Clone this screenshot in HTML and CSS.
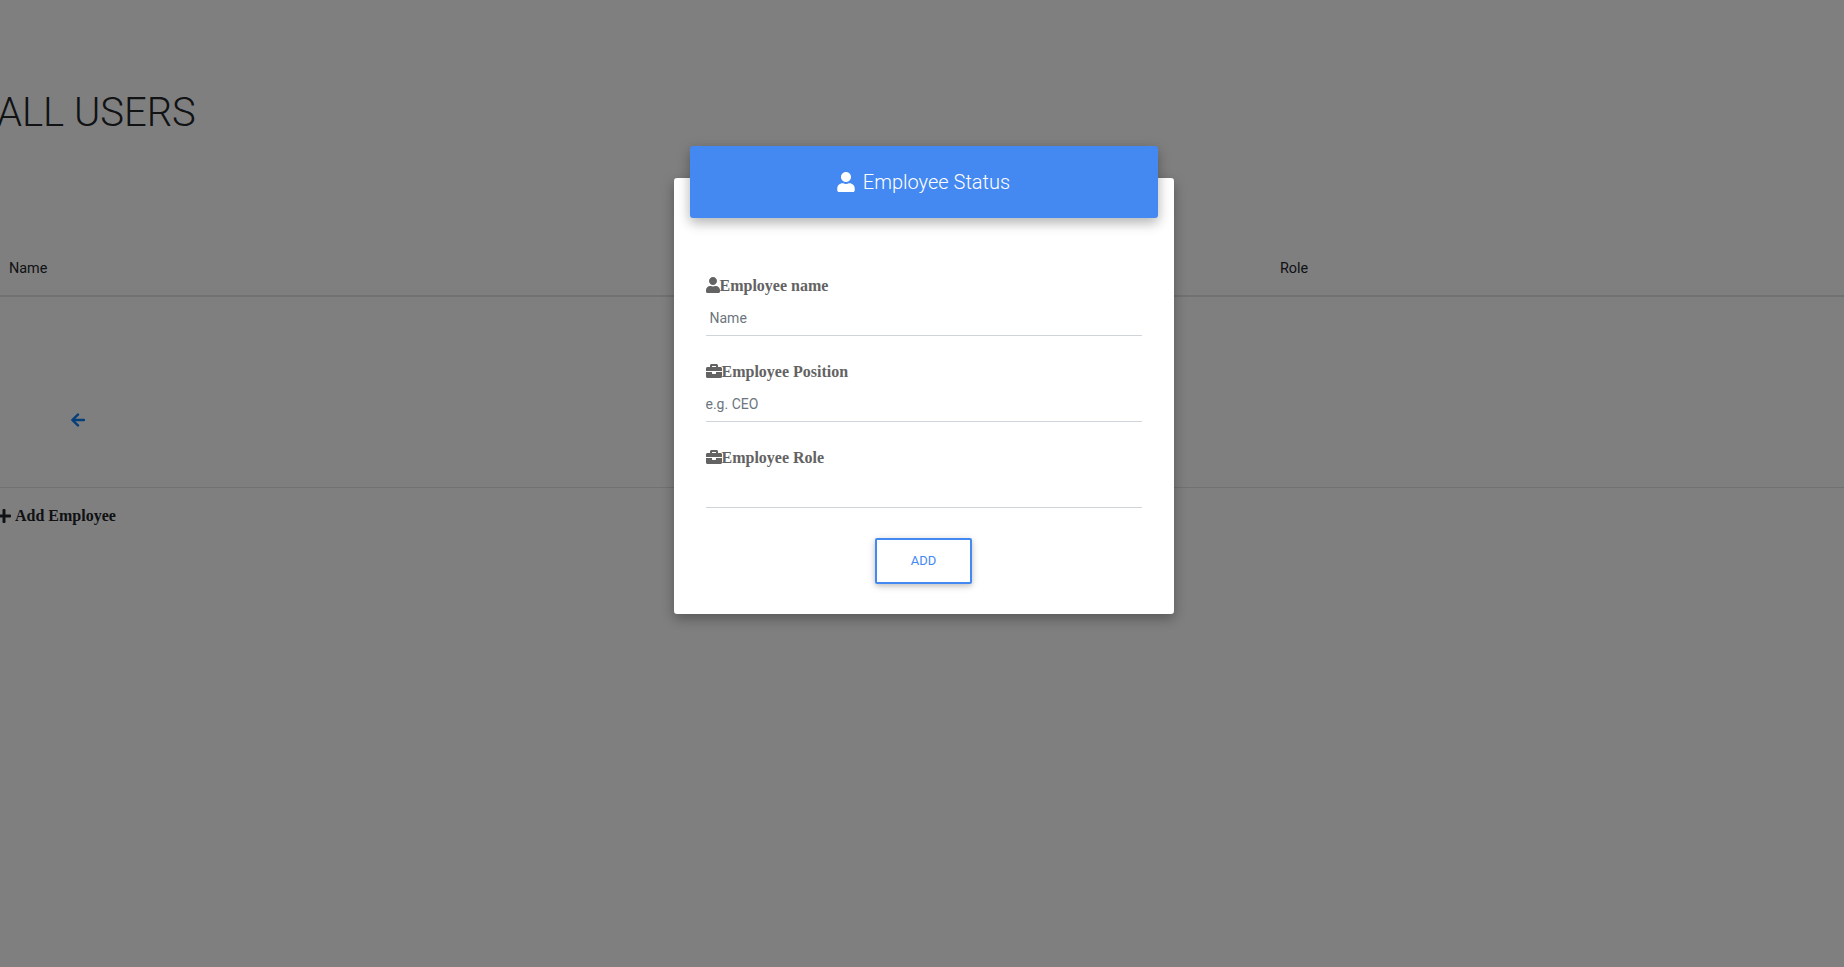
FILE: index.html
```html
<!DOCTYPE html>
<html lang="en">
<head>
  <meta charset="UTF-8" />
  <title>All Users</title>
  <link rel="stylesheet" href="styles.css">
</head>
<body>
  <div class="page">
    <h1 class="title">ALL USERS</h1>
    <div class="table-head">
      <div class="cell cell-name">Name</div>
      <div class="cell">Role</div>
    </div>
    <div class="pager">
      <svg class="icon icon-back" viewBox="0 0 448 512"><path d="M257.5 445.1l-22.2 22.2c-9.4 9.4-24.6 9.4-33.9 0L7 273c-9.4-9.4-9.4-24.6 0-33.9L201.4 44.7c9.4-9.4 24.6-9.4 33.9 0l22.2 22.2c9.5 9.5 9.3 25-.4 34.3L136.6 216H424c13.3 0 24 10.7 24 24v32c0 13.3-10.7 24-24 24H136.6l120.5 114.8c9.8 9.3 10 24.8.4 34.3z"/></svg>
    </div>
    <div class="add-link">
      <svg class="icon icon-user" viewBox="0 0 448 512"><path d="M416 208H272V64c0-17.67-14.33-32-32-32h-32c-17.67 0-32 14.33-32 32v144H32c-17.67 0-32 14.33-32 32v32c0 17.67 14.33 32 32 32h144v144c0 17.67 14.33 32 32 32h32c17.67 0 32-14.33 32-32V304h144c17.67 0 32-14.33 32-32v-32c0-17.67-14.33-32-32-32z"/></svg>
      <span>Add Employee</span>
    </div>
  </div>

  <div class="modal">
    <div class="card">
      <div class="card-header">
        <svg class="icon icon-header" viewBox="0 0 448 512"><path d="M224 256c70.7 0 128-57.3 128-128S294.7 0 224 0 96 57.3 96 128s57.3 128 128 128zm89.6 32h-16.7c-22.2 10.2-46.9 16-72.9 16s-50.6-5.8-72.9-16h-16.7C60.2 288 0 348.2 0 422.4V464c0 26.5 21.5 48 48 48h352c26.5 0 48-21.5 48-48v-41.6c0-74.2-60.2-134.4-134.4-134.4z"/></svg>
        <span>Employee Status</span>
      </div>
      <form class="card-body">
        <div class="field">
          <label class="field-label">
            <svg class="icon icon-user" viewBox="0 0 448 512"><path d="M224 256c70.7 0 128-57.3 128-128S294.7 0 224 0 96 57.3 96 128s57.3 128 128 128zm89.6 32h-16.7c-22.2 10.2-46.9 16-72.9 16s-50.6-5.8-72.9-16h-16.7C60.2 288 0 348.2 0 422.4V464c0 26.5 21.5 48 48 48h352c26.5 0 48-21.5 48-48v-41.6c0-74.2-60.2-134.4-134.4-134.4z"/></svg>Employee name
          </label>
          <input class="field-input field-input-pad" type="text" placeholder="Name">
        </div>
        <div class="field">
          <label class="field-label">
            <svg class="icon icon-case" viewBox="0 0 512 512"><path d="M320 336c0 8.84-7.16 16-16 16h-96c-8.84 0-16-7.16-16-16v-48H0v144c0 25.6 22.4 48 48 48h416c25.6 0 48-22.4 48-48V288H320v48zm144-208h-80V80c0-25.6-22.4-48-48-48H176c-25.6 0-48 22.4-48 48v48H48c-25.6 0-48 22.4-48 48v80h512v-80c0-25.6-22.4-48-48-48zm-144 0H192V96h128v32z"/></svg>Employee Position
          </label>
          <input class="field-input" type="text" placeholder="e.g. CEO">
        </div>
        <div class="field">
          <label class="field-label">
            <svg class="icon icon-case" viewBox="0 0 512 512"><path d="M320 336c0 8.84-7.16 16-16 16h-96c-8.84 0-16-7.16-16-16v-48H0v144c0 25.6 22.4 48 48 48h416c25.6 0 48-22.4 48-48V288H320v48zm144-208h-80V80c0-25.6-22.4-48-48-48H176c-25.6 0-48 22.4-48 48v48H48c-25.6 0-48 22.4-48 48v80h512v-80c0-25.6-22.4-48-48-48zm-144 0H192V96h128v32z"/></svg>Employee Role
          </label>
          <input class="field-input" type="text">
        </div>
        <div class="actions">
          <button type="button" class="add-btn">Add</button>
        </div>
      </form>
    </div>
  </div>
</body>
</html>
```

FILE: styles.css
```css
:root {
  --primary-color: #4488f1;
  --text-color: #212529;
  --label-color: #636363;
  --line-color: #dee2e6;
}

html, body {
  height: 100%;
}

body {
  position: relative;
  margin: 0;
  background: #fff;
  color: var(--text-color);
  font-family: Roboto, sans-serif;
  overflow: hidden;
}

.page {
  margin-left: -3px;
  padding-top: 89px;
}

.title {
  margin: 0;
  font-size: 40px;
  font-weight: 300;
  line-height: 48px;
}

.table-head {
  display: flex;
  margin-top: 108px;
  border-bottom: 2px solid var(--line-color);
  font-size: 14.4px;
  line-height: 24px;
}

.cell {
  padding: 12px 12px 14px;
}

.cell-name {
  width: 1247px;
}

.pager {
  display: flex;
  padding: 115px 0 59px 74px;
  border-bottom: 1px solid var(--line-color);
}

.icon {
  display: inline-block;
  fill: currentColor;
}

.icon-back {
  width: 14px;
  height: 16px;
  color: #0a7cf0;
}

.add-link {
  display: flex;
  align-items: center;
  gap: 4px;
  margin-top: 19px;
  font-family: "Liberation Serif", serif;
  font-size: 16px;
  font-weight: bold;
  line-height: 18px;
}

.icon-user {
  width: 14px;
  height: 16px;
  vertical-align: -2px;
}

.icon-case {
  width: 16px;
  height: 16px;
  vertical-align: -2px;
}

/* Modal */
.modal {
  position: absolute;
  top: 0;
  left: 0;
  right: 0;
  bottom: 0;
  display: flex;
  justify-content: center;
  align-items: flex-start;
  padding-left: 3px;
  background: rgba(0,0,0,0.5);
}

.card {
  width: 500px;
  margin-top: 178px;
  background: #fff;
  border-radius: 3px;
  box-shadow: 0 5px 11px rgba(0,0,0,0.18), 0 4px 15px rgba(0,0,0,0.15);
}

.card-header {
  display: flex;
  align-items: center;
  justify-content: center;
  gap: 8px;
  height: 72px;
  margin: -32px 16px 0;
  background: var(--primary-color);
  color: #fff;
  border-radius: 3px;
  font-size: 20px;
  font-weight: 300;
  box-shadow: 0 5px 11px rgba(0,0,0,0.18), 0 4px 15px rgba(0,0,0,0.15);
}

.icon-header {
  width: 18px;
  height: 20px;
}

.card-body {
  padding: 56px 32px 30px;
}

.field {
  margin-bottom: 24px;
}

.field-label {
  display: block;
  color: var(--label-color);
  font-family: "Liberation Serif", serif;
  font-size: 16px;
  font-weight: bold;
  line-height: 24px;
}

.field-input {
  display: block;
  box-sizing: border-box;
  width: 100%;
  height: 38px;
  padding: 2px 0 0;
  border: none;
  border-bottom: 1px solid #ced4da;
  outline: none;
  background: transparent;
  font-family: Roboto, sans-serif;
  font-size: 14px;
}

.field-input-pad {
  padding-left: 4px;
}

.field-input::placeholder {
  color: #6c757d;
  opacity: 1;
}

.actions {
  display: flex;
  justify-content: center;
  margin-top: 30px;
}

.add-btn {
  width: 97px;
  height: 46px;
  padding-bottom: 3px;
  background: #fff;
  color: var(--primary-color);
  border: 2px solid var(--primary-color);
  border-radius: 2px;
  font-family: Roboto, sans-serif;
  font-size: 13px;
  text-transform: uppercase;
  box-shadow: 0 2px 5px rgba(0,0,0,0.16), 0 2px 10px rgba(0,0,0,0.12);
}
```
